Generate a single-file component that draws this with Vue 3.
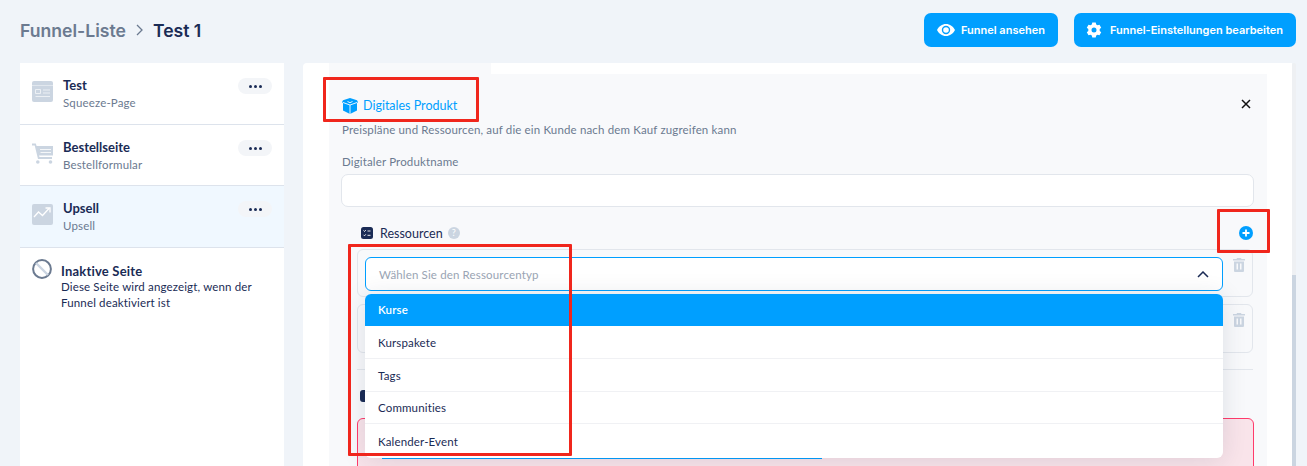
<template>
  <div class="page">
    <header class="top">
      <div class="crumbs">
        <span class="crumb-link">Funnel-Liste</span>
        <svg class="crumb-sep" width="10" height="12" viewBox="0 0 10 12"><path d="M2 1l5 5-5 5" fill="none" stroke="#6b7a90" stroke-width="1.3"/></svg>
        <span class="crumb-now">Test 1</span>
      </div>
      <div class="actions">
        <button class="btn view">
          <svg width="18" height="12" viewBox="0 0 18 12"><path fill="#fff" fill-rule="evenodd" d="M9 0c3.900 0 7.200 2.400 9 6-1.800 3.600-5.100 6-9 6S1.800 9.600 0 6c1.800-3.600 5.100-6 9-6zm0 1.800a4.200 4.200 0 100 8.400 4.200 4.200 0 000-8.400zm0 1.400a2.800 2.800 0 110 5.600 2.800 2.800 0 010-5.600z"/></svg>
          Funnel ansehen
        </button>
        <button class="btn settings">
          <svg width="16" height="16" viewBox="0 0 16 16"><path fill="#fff" fill-rule="evenodd" d="M6.300.5h3.400l.5 2 1.300.8 2-.6 1.700 3-1.500 1.400v1.800l1.500 1.400-1.700 3-2-.6-1.300.8-.5 2H6.300l-.5-2-1.300-.8-2 .6-1.700-3 1.500-1.400V7.100L.8 5.700l1.700-3 2 .6 1.300-.8zM8 5.500a2.500 2.500 0 100 5 2.500 2.500 0 000-5z"/></svg>
          Funnel-Einstellungen bearbeiten
        </button>
      </div>
    </header>

    <main class="content">
      <aside class="steps">
        <div v-for="s in steps" :key="s.title" class="step" :class="{ active: s.active }">
          <svg v-if="s.icon === 'page'" class="step-icon" viewBox="0 0 21 21"><path fill="#cbd5e1" d="M2 0h17a2 2 0 012 2v17a2 2 0 01-2 2H2a2 2 0 01-2-2V2a2 2 0 012-2z"/><path d="M0 4.500h21" stroke="#e6ebf1" stroke-width=".8"/><path d="M3.500 8.500h5v4h-5zM11 9h7M11 12h7M3.500 15.500h14.500" fill="none" stroke="#f4f6f9" stroke-width=".8"/></svg>
          <svg v-else-if="s.icon === 'cart'" class="step-icon" viewBox="0 0 21 21"><path fill="#cbd5e1" d="M0 .5h3.800l.8 2.500H21v9.500H7l.5 1.500H20v2H6L2.700 2.500H0z"/><circle cx="5.800" cy="19" r="1.800" fill="#cbd5e1"/><circle cx="18.500" cy="19" r="1.800" fill="#cbd5e1"/><path d="M8 6.500h11M8.500 9.500h10.500" stroke="#fff" stroke-width=".8"/></svg>
          <svg v-else class="step-icon" viewBox="0 0 21 21"><rect width="21" height="21" rx="2" fill="#cbd5e1"/><path d="M2 13l4.500-5 4 3.500L17 4.500" fill="none" stroke="#fff" stroke-width="1.300"/><path d="M13.500 4h4.500v4.500" fill="none" stroke="#fff" stroke-width="1.300"/></svg>
          <div class="step-text">
            <div class="step-title">{{ s.title }}</div>
            <div class="step-sub">{{ s.sub }}</div>
          </div>
          <button class="more"><i></i><i></i><i></i></button>
        </div>
        <div class="inactive">
          <svg class="ban" viewBox="0 0 20 20"><circle cx="10" cy="10" r="8.900" fill="#fff" stroke="#6b7a90" stroke-width="2"/><path d="M4 4l12 12" stroke="#cbd5e1" stroke-width="2.400"/></svg>
          <div class="inactive-text">
            <div class="inactive-title">Inaktive Seite</div>
            <div class="inactive-sub">Diese Seite wird angezeigt, wenn der Funnel deaktiviert ist</div>
          </div>
        </div>
      </aside>

      <section class="panel">
        <div class="tabbar"></div>
        <div class="card">
          <button class="close" aria-label="Schließen">
            <svg width="10" height="10" viewBox="0 0 10 10"><path d="M1 1l8 8M9 1L1 9" stroke="#111" stroke-width="1.500"/></svg>
          </button>
          <div class="card-title">
            <svg width="16" height="16" viewBox="0 0 16 16"><path fill="#009fff" d="M8 0l7 2.200 1 2-1 .8v7.500L8 16l-7-3.500V5L0 4.200l1-2z"/><path d="M1 4.500L8 7l7-2.500M8 7v9M5.500 3.500L8 4.700l2.500-1.200" fill="none" stroke="#fff" stroke-width=".9"/></svg>
            Digitales Produkt
          </div>
          <p class="card-desc">Preispläne und Ressourcen, auf die ein Kunde nach dem Kauf zugreifen kann</p>
          <label class="field-label">Digitaler Produktname</label>
          <div class="text-input"></div>

          <div class="res-head">
            <svg width="12" height="12" viewBox="0 0 12 12"><rect width="12" height="12" rx="2.500" fill="#1a2b55"/><path d="M2.500 3.500l1 1 1.300-1.500M2.500 7.800l1 1 1.300-1.500M6.500 4h3M6.500 8.300h3" fill="none" stroke="#fff" stroke-width=".9"/></svg>
            <span class="res-label">Ressourcen</span>
            <span class="hint">?</span>
            <svg class="add" width="14" height="14" viewBox="0 0 14 14"><circle cx="7" cy="7" r="7" fill="#009fff"/><path d="M7 3.500v7M3.500 7h7" stroke="#fff" stroke-width="1.800"/></svg>
          </div>

          <div class="res-box first">
            <div class="select">
              <span>Wählen Sie den Ressourcentyp</span>
              <svg width="12" height="7" viewBox="0 0 12 7"><path d="M1 6l5-5 5 5" fill="none" stroke="#1a2b55" stroke-width="1.500"/></svg>
            </div>
            <svg class="trash" width="12" height="14" viewBox="0 0 12 14"><path fill="#cbd5e1" fill-rule="evenodd" d="M4 0h4l.5 1H12v1.500H0V1h3.500zM1 3.500h10V13a1 1 0 01-1 1H2a1 1 0 01-1-1zM3.500 5.500v6h1.500v-6zM7 5.500v6h1.500v-6z"/></svg>
          </div>
          <div class="res-box second">
            <svg class="trash" width="12" height="14" viewBox="0 0 12 14"><path fill="#cbd5e1" fill-rule="evenodd" d="M4 0h4l.5 1H12v1.500H0V1h3.500zM1 3.500h10V13a1 1 0 01-1 1H2a1 1 0 01-1-1zM3.500 5.500v6h1.500v-6zM7 5.500v6h1.500v-6z"/></svg>
          </div>
          <div class="divider"></div>
          <div class="plans-head"><span class="plans-icon"></span></div>
          <div class="alert"><span class="alert-line"></span></div>

          <ul class="menu">
            <li v-for="(o, i) in options" :key="o" :class="{ selected: i === 0 }">{{ o }}</li>
          </ul>
        </div>
      </section>
      <div class="scroll"><div class="thumb"></div></div>
    </main>

    <div class="mark m1"></div>
    <div class="mark m2"></div>
    <div class="mark m3"></div>
  </div>
</template>

<script setup>
const steps = [
  { title: 'Test', sub: 'Squeeze-Page', icon: 'page' },
  { title: 'Bestellseite', sub: 'Bestellformular', icon: 'cart' },
  { title: 'Upsell', sub: 'Upsell', icon: 'up', active: true }
]
const options = ['Kurse', 'Kurspakete', 'Tags', 'Communities', 'Kalender-Event']
</script>

<style>
html, body { margin: 0; overflow: hidden; }
</style>

<style scoped>
.page {
  position: relative;
  width: 1307px;
  height: 466px;
  overflow: hidden;
  background: #f0f4f9;
  font-family: Lato, "Noto Sans", sans-serif;
  color: #1a2b55;
}
.top {
  height: 63px;
  box-sizing: border-box;
  padding: 13px 11px 0 20px;
  display: flex;
  justify-content: space-between;
  align-items: flex-start;
}
.crumbs {
  display: flex;
  align-items: center;
  gap: 10px;
  height: 34px;
  font-family: Inter, sans-serif;
  font-size: 17.6px;
  font-weight: 600;
}
.crumb-link { color: #6b7a90; }
.crumb-now { color: #1a2b55; }
.crumb-sep { margin: 0 -2px 0 -1px; }
.actions { display: flex; gap: 16px; }
.btn {
  height: 34px;
  border: 0;
  border-radius: 7px;
  background: #009fff;
  color: #fff;
  padding: 0 13px;
  display: flex;
  align-items: center;
  gap: 7px;
  font-family: Inter, sans-serif;
  font-size: 11px;
  font-weight: 600;
}
.btn.view { gap: 6px; }
.btn.settings { padding-left: 12px; gap: 8px; }
.content {
  display: flex;
  height: 403px;
  padding-left: 20px;
}
.steps {
  width: 264px;
  flex: none;
  background: #fff;
  margin-right: 19px;
}
.step {
  height: 61px;
  padding: 0 12px;
  display: flex;
  align-items: flex-start;
  border-bottom: 1px solid #dde3ec;
  background: #fff;
}
.step:nth-child(2) { height: 60px; }
.step.active { background: #f0f8ff; }
.step-icon {
  width: 21px;
  height: 21px;
  margin-top: 18px;
  flex: none;
}
.step-text { flex: 1; margin-left: 10px; padding-top: 14px; }
.step-title { font-size: 13px; font-weight: 700; line-height: 16px; }
.step-sub {
  font-size: 11.5px;
  letter-spacing: 0.15px;
  line-height: 14px;
  margin-top: 3px;
  color: #6b7a90;
}
.more {
  width: 34px;
  height: 16px;
  margin-top: 15px;
  padding: 0;
  border: 0;
  border-radius: 8px;
  background: #f3f5f8;
  display: flex;
  align-items: center;
  justify-content: center;
  gap: 2px;
}
.more i {
  width: 3px;
  height: 3px;
  border-radius: 50%;
  background: #1a2b55;
}
.inactive {
  display: flex;
  padding: 12px 12px 0;
}
.ban { width: 20px; height: 20px; flex: none; margin-top: -1px; }
.inactive-text { margin-left: 9px; padding-top: 3px; }
.inactive-title { font-size: 13px; font-weight: 700; line-height: 16px; letter-spacing: 0.2px; }
.inactive-sub { font-size: 11.5px; letter-spacing: 0.15px; line-height: 16px; }
.panel {
  position: relative;
  width: 989px;
  flex: none;
  background: #fff;
  border-radius: 4px 0 0 0;
  padding: 0 25px 0 26px;
  box-sizing: border-box;
}
.tabbar { width: 162px; height: 11px; background: #f8f9fb; }
.card {
  position: relative;
  height: 392px;
  background: #f8f9fb;
  box-sizing: border-box;
  padding: 0 13px;
}
.close {
  position: absolute;
  top: 25px;
  right: 16px;
  padding: 0;
  border: 0;
  background: none;
  display: flex;
}
.card-title {
  display: flex;
  align-items: center;
  gap: 5px;
  padding-top: 23px;
  height: 17px;
  color: #009fff;
  font-size: 12.5px;
  font-weight: 400;
}
.card-desc {
  margin: 9px 0 0;
  font-size: 11.5px;
  letter-spacing: 0.15px;
  line-height: 14px;
  color: #6b7a90;
}
.field-label {
  display: block;
  margin-top: 18px;
  font-size: 11.5px;
  letter-spacing: 0.15px;
  line-height: 14px;
  color: #6b7a90;
}
.text-input {
  margin: 5px 0 0 -1px;
  height: 31px;
  background: #fff;
  border: 1px solid #e2e6ec;
  border-radius: 7px;
}
.res-head {
  display: flex;
  align-items: center;
  height: 20px;
  margin-top: 16px;
  padding-left: 19px;
  gap: 7px;
}
.res-label { font-size: 12.5px; color: #1a2b55; }
.hint {
  width: 12px;
  height: 12px;
  border-radius: 50%;
  background: #cbd5e1;
  color: #fff;
  font-size: 9px;
  line-height: 12px;
  text-align: center;
  margin-left: -2px;
}
.add { margin-left: auto; margin-right: 1px; }
.res-box {
  position: relative;
  height: 48px;
  box-sizing: border-box;
  margin: 0 1px 0 15px;
  border: 1px solid #e2e6ec;
  border-radius: 6px;
  padding: 7px 0 0 7px;
}
.res-box.first { margin-top: 6px; }
.res-box.second { margin-top: 7px; height: 49px; }
.trash { position: absolute; right: 7px; top: 8px; }
.select {
  width: 858px;
  height: 34px;
  box-sizing: border-box;
  background: #fff;
  border: 1px solid #009fff;
  border-radius: 6px;
  padding: 0 13px;
  display: flex;
  align-items: center;
  justify-content: space-between;
  font-size: 11.5px;
  letter-spacing: 0.15px;
  color: #9aa5b4;
}
.divider {
  height: 1px;
  background: #e2e6ec;
  margin: 16px 1px 0 15px;
}
.plans-head { padding-left: 18px; margin-top: 20px; height: 12px; }
.plans-icon {
  display: block;
  width: 12px;
  height: 12px;
  border-radius: 3px;
  background: #1a2b55;
}
.alert {
  position: relative;
  height: 60px;
  margin: 16px 0 0 15px;
  box-sizing: border-box;
  border: 1px solid #ff3b6b;
  border-radius: 6px;
  background: #f9e4ea;
}
.alert-line {
  position: absolute;
  left: 24px;
  top: 39px;
  width: 440px;
  height: 1px;
  background: #009fff;
}
.menu {
  position: absolute;
  left: 36px;
  top: 220px;
  width: 858px;
  height: 164px;
  margin: 0;
  padding: 0;
  list-style: none;
  background: #fff;
  border-radius: 6px;
  box-shadow: 0 2px 24px rgba(30, 40, 70, 0.12);
  overflow: hidden;
}
.menu li {
  height: 33px;
  box-sizing: border-box;
  padding: 0 13px;
  display: flex;
  align-items: center;
  font-size: 11.5px;
  letter-spacing: 0.15px;
  color: #1a2b55;
  border-bottom: 1px solid #f0f1f4;
}
.menu li:nth-child(4) { height: 32px; }
.menu li:last-child { border-bottom: 0; height: 34px; }
.menu li.selected {
  height: 32px;
  padding-bottom: 1px;
  background: #009fff;
  color: #fff;
  font-weight: 600;
  border-bottom: 0;
}
.scroll {
  width: 4px;
  flex: none;
  background: #eef0f3;
  border-radius: 2px 2px 0 0;
}
.thumb {
  margin-top: 212px;
  height: 191px;
  background: #cbd5e1;
}
.mark {
  position: absolute;
  border: 3px solid #f0261c;
  box-sizing: border-box;
  pointer-events: none;
  border-radius: 1px;
}
.m1 { left: 323px; top: 77px; width: 156px; height: 45px; }
.m2 { left: 348px; top: 244px; width: 224px; height: 212px; }
.m3 { left: 1217px; top: 209px; width: 53px; height: 44px; }
</style>
